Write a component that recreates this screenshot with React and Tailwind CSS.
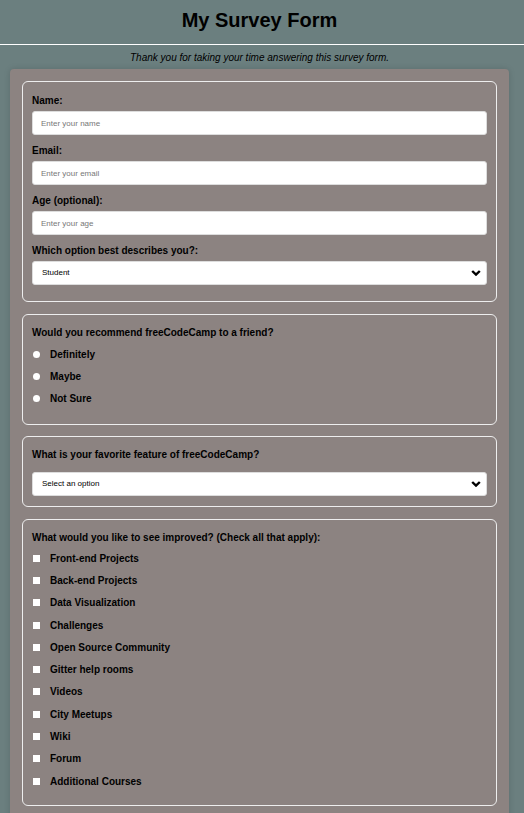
import React from "react";

const Chevron = () => (
  <svg width="10" height="7" viewBox="0 0 10 7" className="absolute right-[5px] top-1/2 -translate-y-1/2">
    <path d="M1.2 1.5 L5 5.2 L8.8 1.5" fill="none" stroke="#000" strokeWidth="2.4" />
  </svg>
);

const Field = ({ label, placeholder, first }) => (
  <div className={first ? "" : "mt-[9px]"}>
    <div className="text-[10px] leading-[13px] font-bold text-black mb-[4px]">{label}</div>
    <input
      placeholder={placeholder}
      className="block w-full h-[24px] bg-white rounded-[3px] px-[8px] text-[8px] text-black placeholder:text-[#777] outline-none border border-[#ddd]"
    />
  </div>
);

const SelectBox = ({ text }) => (
  <div className="relative w-full h-[24px] bg-white rounded-[3px] border border-[#ddd] flex items-center px-[9px] text-[8px] text-black">
    {text}
    <Chevron />
  </div>
);

const Radio = ({ label }) => (
  <div className="flex items-center h-[22px]">
    <span className="w-[7px] h-[7px] rounded-full bg-white ml-[1px]" />
    <span className="ml-[10px] text-[10px] font-bold text-black">{label}</span>
  </div>
);

const Check = ({ label }) => (
  <div className="flex items-center h-[22.3px]">
    <span className="w-[7px] h-[7px] bg-white ml-[1px]" />
    <span className="ml-[10px] text-[10px] font-bold text-black">{label}</span>
  </div>
);

export default function App() {
  const checks = [
    "Front-end Projects",
    "Back-end Projects",
    "Data Visualization",
    "Challenges",
    "Open Source Community",
    "Gitter help rooms",
    "Videos",
    "City Meetups",
    "Wiki",
    "Forum",
    "Additional Courses",
  ];
  return (
    <div className="min-h-[813px] bg-[#6b7f7f] font-['Liberation_Sans',Arial,sans-serif] overflow-hidden">
      <header className="h-[45px] border-b border-white flex items-center justify-center pr-[5px]">
        <h1 className="text-[20px] font-bold text-black leading-none -mt-[4px]">My Survey Form</h1>
      </header>
      <div className="w-[519px]">
        <p className="text-center italic text-[10px] text-black mt-[7px] leading-[12px]">
          Thank you for taking your time answering this survey form.
        </p>
        <div className="mx-[10px] mt-[5px] bg-[#8c8381] rounded-[4px] px-[12px] pt-[12px] pb-[20px] shadow-[0_0_6px_rgba(0,0,0,0.15)]">
          <div className="border border-[#eee] rounded-[6px] px-[9px] pt-[12px] pb-[16px]">
            <Field first label="Name:" placeholder="Enter your name" />
            <Field label="Email:" placeholder="Enter your email" />
            <Field label="Age (optional):" placeholder="Enter your age" />
            <div className="mt-[9px]">
              <div className="text-[10px] leading-[13px] font-bold text-black mb-[4px]">Which option best describes you?:</div>
              <SelectBox text="Student" />
            </div>
          </div>

          <div className="mt-[12px] border border-[#eee] rounded-[6px] px-[9px] pt-[11px] pb-[15px]">
            <div className="text-[10px] leading-[13px] font-bold text-black mb-[4px]">Would you recommend freeCodeCamp to a friend?</div>
            <Radio label="Definitely" />
            <Radio label="Maybe" />
            <Radio label="Not Sure" />
          </div>

          <div className="mt-[11px] border border-[#eee] rounded-[6px] px-[9px] pt-[11px] pb-[9px]">
            <div className="text-[10px] leading-[13px] font-bold text-black mb-[11px]">What is your favorite feature of freeCodeCamp?</div>
            <div className="h-[25px]">
              <SelectBox text="Select an option" />
            </div>
          </div>

          <div className="mt-[12px] border border-[#eee] rounded-[6px] px-[9px] pt-[11px] pb-[13px]">
            <div className="text-[10px] leading-[13px] font-bold text-black mb-[3px]">What would you like to see improved? (Check all that apply):</div>
            {checks.map((c) => (
              <Check key={c} label={c} />
            ))}
          </div>
        </div>
      </div>
    </div>
  );
}
